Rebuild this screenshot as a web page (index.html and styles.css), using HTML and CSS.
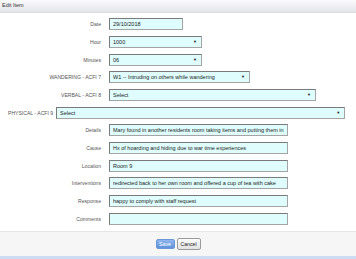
FILE: index.html
```html
<!DOCTYPE html>
<html lang="en">
<head>
    <meta charset="UTF-8">
    <meta name="viewport" content="width=device-width, initial-scale=1.0">
    <title>Edit Item</title>
    <link rel="stylesheet" href="styles.css">
</head>
<body>
    <div class="dialog">
        <div class="title-bar">Edit Item</div>

        <div class="form">
            <div class="row">
                <label class="lbl">Date</label>
                <input class="field w-date" type="text" value="29/10/2018">
            </div>
            <div class="row">
                <label class="lbl">Hour</label>
                <div class="pick w-short"><select class="field"><option>1000</option></select><span class="arrow">&#9660;</span></div>
            </div>
            <div class="row">
                <label class="lbl">Minutes</label>
                <div class="pick w-short"><select class="field"><option>06</option></select><span class="arrow">&#9660;</span></div>
            </div>
            <div class="row">
                <label class="lbl">WANDERING - ACFI 7</label>
                <div class="pick w-mid"><select class="field"><option>W1 -- Intruding on others while wandering</option></select><span class="arrow">&#9660;</span></div>
            </div>
            <div class="row">
                <label class="lbl">VERBAL - ACFI 8</label>
                <div class="pick w-long"><select class="field"><option>Select</option></select><span class="arrow">&#9660;</span></div>
            </div>
            <div class="row wide">
                <label class="lbl-free">PHYSICAL - ACFI 9</label>
                <div class="pick w-wide"><select class="field"><option>Select</option></select><span class="arrow">&#9660;</span></div>
            </div>
            <div class="row">
                <label class="lbl">Details</label>
                <input class="field w-text" type="text" value="Mary found in another residents room taking items and putting them in her room">
            </div>
            <div class="row">
                <label class="lbl">Cause</label>
                <input class="field w-text" type="text" value="Hx of hoarding and hiding due to war time experiences">
            </div>
            <div class="row">
                <label class="lbl">Location</label>
                <input class="field w-text" type="text" value="Room 9">
            </div>
            <div class="row">
                <label class="lbl">Interventions</label>
                <input class="field w-text" type="text" value="redirected back to her own room and offered a cup of tea with cake">
            </div>
            <div class="row">
                <label class="lbl">Response</label>
                <input class="field w-text" type="text" value="happy to comply with staff request">
            </div>
            <div class="row">
                <label class="lbl">Comments</label>
                <input class="field w-text" type="text" value="">
            </div>
        </div>

        <div class="footer">
            <button class="btn btn-save">Save</button>
            <button class="btn btn-cancel">Cancel</button>
        </div>
        <div class="strip"></div>
    </div>
</body>
</html>
```

FILE: styles.css
```css
body {
    margin: 0;
    font-family: "Liberation Sans", Arial, sans-serif;
    background: #ffffff;
    width: 356px;
    height: 259px;
    overflow: hidden;
}
.dialog {
    display: flex;
    flex-direction: column;
    height: 259px;
}
.title-bar {
    height: 13px;
    line-height: 10px;
    padding-left: 2px;
    font-size: 5.5px;
    color: #333;
    background: linear-gradient(#fbfbfc, #e4e5ea);
    border-bottom: 1px solid #dcdde2;
}
.form {
    flex: 1;
    display: flex;
    flex-direction: column;
    padding-top: 5px;
}
.row {
    display: flex;
    align-items: center;
    height: 12px;
    margin-bottom: 5.7px;
}
.lbl {
    width: 101px;
    margin-right: 8px;
    text-align: right;
    font-size: 5.1px;
    color: #555;
}
.wide {
    padding-left: 8px;
}
.lbl-free {
    margin-right: 3px;
    font-size: 5.1px;
    color: #555;
}
.field {
    box-sizing: border-box;
    display: block;
    height: 12px;
    margin: 0;
    padding: 0 3px;
    font-family: "Liberation Sans", Arial, sans-serif;
    font-size: 5.5px;
    color: #222;
    background: #e0fdfd;
    border: 1px solid #a4a4a4;
    border-top-color: #7a7a7a;
    border-left-color: #7a7a7a;
    border-radius: 0;
    outline: none;
}
.pick {
    position: relative;
    height: 12px;
}
.pick select {
    width: 100%;
    appearance: none;
    -webkit-appearance: none;
}
.arrow {
    position: absolute;
    right: 5px;
    top: 4px;
    font-size: 4px;
    line-height: 4px;
    color: #111;
}
.w-date { width: 74px; }
.w-short { width: 93px; }
.w-mid { width: 141px; }
.w-long { width: 207px; }
.w-wide { width: 289px; }
.w-text { width: 179px; }
.footer {
    height: 26px;
    display: flex;
    justify-content: center;
    align-items: center;
    gap: 2px;
    background: #f6f6f6;
    border-top: 1px solid #e6e6e6;
}
.btn {
    font-family: "Liberation Sans", Arial, sans-serif;
    font-size: 5.2px;
    padding: 0;
    border-radius: 2px;
    cursor: pointer;
}
.btn-save {
    width: 19px;
    height: 10px;
    color: #fff;
    background: linear-gradient(#8fb6ee, #5f93dc);
    border: 1px solid #6c97d6;
}
.btn-cancel {
    width: 24px;
    height: 12px;
    color: #222;
    background: linear-gradient(#fdfdfd, #e2e2e2);
    border: 1px solid #9a9a9a;
}
.strip {
    height: 3px;
    background: #cddcf2;
}
```
